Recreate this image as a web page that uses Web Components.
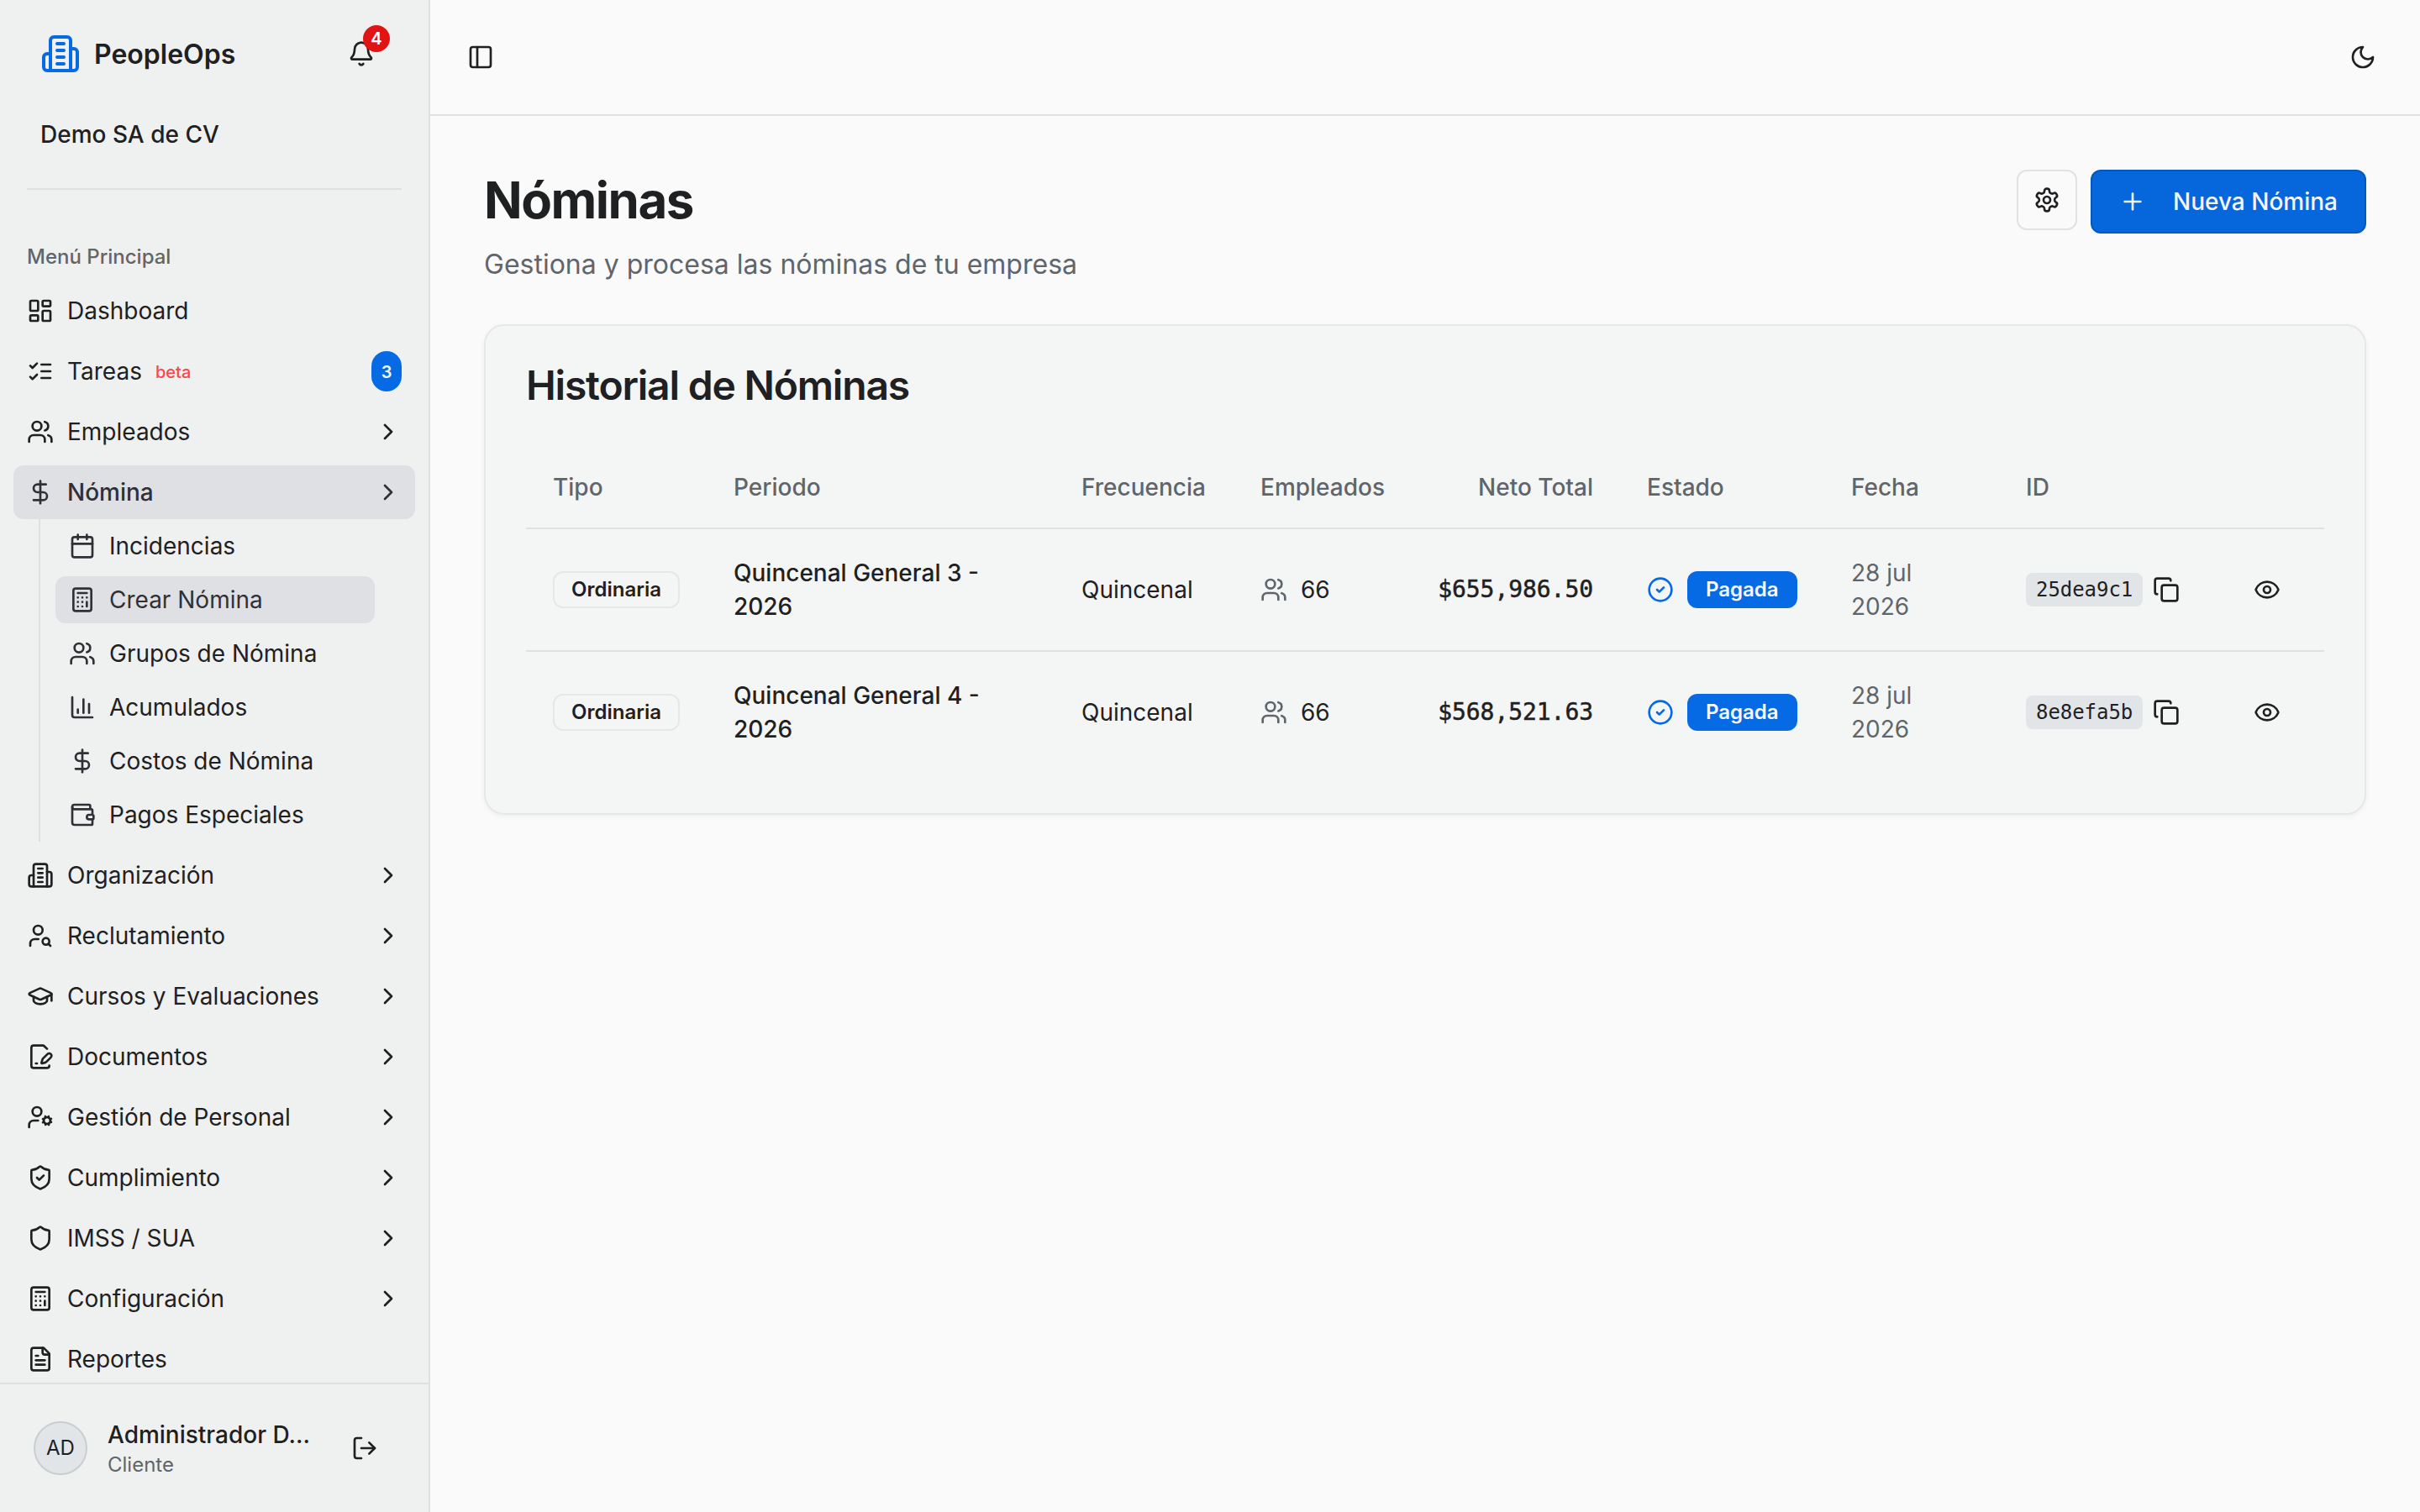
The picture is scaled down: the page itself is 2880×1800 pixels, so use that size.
<!DOCTYPE html>
<html lang="es">
<head>
<meta charset="utf-8">
<title>Nóminas | PeopleOps</title>
<style>
  :root {
    --background: #fafafa;
    --foreground: #1f2021;
    --muted: #e2e5e8;
    --muted-foreground: #60656c;
    --border: #dfe1e0;
    --primary: #066ae5;
    --sidebar: #eff1f0;
    --sidebar-accent: #dfe0e4;
    --sidebar-accent-foreground: #303136;
    --card: #f4f6f5;
    --card-border: #e6e8e7;
    --mono: "DejaVu Sans Mono", "Liberation Mono", monospace;
  }

  body {
    margin: 0;
    background: var(--background);
    color: var(--foreground);
    font: 400 28px/40px Inter, "Liberation Sans", sans-serif;
  }
</style>
</head>
<body>
<people-app></people-app>

<script>
const ICONS = {
  building: '<path d="M6 22V4a2 2 0 0 1 2-2h8a2 2 0 0 1 2 2v18Z"/><path d="M6 12H4a2 2 0 0 0-2 2v6a2 2 0 0 0 2 2h2"/><path d="M18 9h2a2 2 0 0 1 2 2v9a2 2 0 0 1-2 2h-2"/><path d="M10 6h4M10 10h4M10 14h4M10 18h4"/>',
  bell: '<path d="M10.268 21a2 2 0 0 0 3.464 0"/><path d="M3.262 15.326A1 1 0 0 0 4 17h16a1 1 0 0 0 .74-1.673C19.41 13.956 18 12.499 18 8A6 6 0 0 0 6 8c0 4.499-1.411 5.956-2.738 7.326"/>',
  panel: '<rect width="18" height="18" x="3" y="3" rx="2"/><path d="M9 3v18"/>',
  moon: '<path d="M12 3a6 6 0 0 0 9 9 9 9 0 1 1-9-9Z"/>',
  settings: '<path d="M12.22 2h-.44a2 2 0 0 0-2 2v.18a2 2 0 0 1-1 1.73l-.43.25a2 2 0 0 1-2 0l-.15-.08a2 2 0 0 0-2.73.73l-.22.38a2 2 0 0 0 .73 2.73l.15.1a2 2 0 0 1 1 1.72v.51a2 2 0 0 1-1 1.74l-.15.09a2 2 0 0 0-.73 2.73l.22.38a2 2 0 0 0 2.73.73l.15-.08a2 2 0 0 1 2 0l.43.25a2 2 0 0 1 1 1.73V20a2 2 0 0 0 2 2h.44a2 2 0 0 0 2-2v-.18a2 2 0 0 1 1-1.73l.43-.25a2 2 0 0 1 2 0l.15.08a2 2 0 0 0 2.73-.73l.22-.39a2 2 0 0 0-.73-2.73l-.15-.08a2 2 0 0 1-1-1.74v-.5a2 2 0 0 1 1-1.74l.15-.09a2 2 0 0 0 .73-2.73l-.22-.38a2 2 0 0 0-2.73-.73l-.15.08a2 2 0 0 1-2 0l-.43-.25a2 2 0 0 1-1-1.73V4a2 2 0 0 0-2-2z"/><circle cx="12" cy="12" r="3"/>',
  plus: '<path d="M5 12h14"/><path d="M12 5v14"/>',
  dashboard: '<rect width="7" height="9" x="3" y="3" rx="1"/><rect width="7" height="5" x="14" y="3" rx="1"/><rect width="7" height="9" x="14" y="12" rx="1"/><rect width="7" height="5" x="3" y="16" rx="1"/>',
  tasks: '<path d="m3 17 2 2 4-4"/><path d="m3 7 2 2 4-4"/><path d="M13 6h8"/><path d="M13 12h8"/><path d="M13 18h8"/>',
  users: '<path d="M16 21v-2a4 4 0 0 0-4-4H6a4 4 0 0 0-4 4v2"/><circle cx="9" cy="7" r="4"/><path d="M22 21v-2a4 4 0 0 0-3-3.87"/><path d="M16 3.13a4 4 0 0 1 0 7.75"/>',
  dollar: '<path d="M12 2v20"/><path d="M17 5H9.5a3.5 3.5 0 0 0 0 7h5a3.5 3.5 0 0 1 0 7H6"/>',
  calendar: '<path d="M8 2v4"/><path d="M16 2v4"/><rect width="18" height="18" x="3" y="4" rx="2"/><path d="M3 10h18"/>',
  calculator: '<rect width="16" height="20" x="4" y="2" rx="2"/><path d="M8 6h8"/><path d="M16 14v4"/><path d="M16 10h.01M12 10h.01M8 10h.01M12 14h.01M8 14h.01M12 18h.01M8 18h.01"/>',
  chart: '<path d="M3 3v16a2 2 0 0 0 2 2h16"/><path d="M18 17V9"/><path d="M13 17V5"/><path d="M8 17v-3"/>',
  wallet: '<path d="M19 7V4a1 1 0 0 0-1-1H5a2 2 0 0 0 0 4h15a1 1 0 0 1 1 1v4h-3a2 2 0 0 0 0 4h3a1 1 0 0 0 1-1v-2a1 1 0 0 0-1-1"/><path d="M3 5v14a2 2 0 0 0 2 2h15a1 1 0 0 0 1-1v-4"/>',
  userSearch: '<circle cx="10" cy="7" r="4"/><path d="M10.3 15H7a4 4 0 0 0-4 4v2"/><circle cx="17" cy="17" r="3"/><path d="m21 21-1.9-1.9"/>',
  graduation: '<path d="M21.42 10.922a1 1 0 0 0-.019-1.838L12.83 5.18a2 2 0 0 0-1.66 0L2.6 9.08a1 1 0 0 0 0 1.832l8.57 3.908a2 2 0 0 0 1.66 0z"/><path d="M22 10v6"/><path d="M6 12.5V16a6 3 0 0 0 12 0v-3.5"/>',
  filePen: '<path d="m18 5-2.414-2.414A2 2 0 0 0 14.172 2H6a2 2 0 0 0-2 2v16a2 2 0 0 0 2 2h12a2 2 0 0 0 2-2"/><path d="M21.378 12.626a1 1 0 0 0-3.004-3.004l-4.01 4.012a2 2 0 0 0-.506.854l-.837 2.87a.5.5 0 0 0 .62.62l2.87-.837a2 2 0 0 0 .854-.506z"/><path d="M8 18h1"/>',
  userCog: '<circle cx="18" cy="15" r="3"/><circle cx="9" cy="7" r="4"/><path d="M10 15H6a4 4 0 0 0-4 4v2"/><path d="m21.7 16.4-.9-.3"/><path d="m15.2 13.9-.9-.3"/><path d="m16.6 18.7.3-.9"/><path d="m19.1 12.2.3-.9"/><path d="m19.6 18.7-.4-1"/><path d="m16.8 12.3-.4-1"/><path d="m14.3 16.6 1-.4"/><path d="m20.7 13.8 1-.4"/>',
  shield: '<path d="M20 13c0 5-3.5 7.5-7.66 8.95a1 1 0 0 1-.67-.01C7.5 20.5 4 18 4 13V6a1 1 0 0 1 1-1c2 0 4.5-1.2 6.24-2.72a1.17 1.17 0 0 1 1.52 0C14.51 3.81 17 5 19 5a1 1 0 0 1 1 1z"/>',
  fileText: '<path d="M15 2H6a2 2 0 0 0-2 2v16a2 2 0 0 0 2 2h12a2 2 0 0 0 2-2V7Z"/><path d="M14 2v4a2 2 0 0 0 2 2h4"/><path d="M10 9H8"/><path d="M16 13H8"/><path d="M16 17H8"/>',
  chevron: '<path d="m9 18 6-6-6-6"/>',
  logout: '<path d="M9 21H5a2 2 0 0 1-2-2V5a2 2 0 0 1 2-2h4"/><path d="m16 17 5-5-5-5"/><path d="M21 12H9"/>',
  circleCheck: '<circle cx="12" cy="12" r="10"/><path d="m9 12 2 2 4-4"/>',
  copy: '<rect width="14" height="14" x="8" y="8" rx="2"/><path d="M4 16c-1.1 0-2-.9-2-2V4c0-1.1.9-2 2-2h10c1.1 0 2 .9 2 2"/>',
  eye: '<path d="M2.062 12.348a1 1 0 0 1 0-.696 10.75 10.75 0 0 1 19.876 0 1 1 0 0 1 0 .696 10.75 10.75 0 0 1-19.876 0"/><circle cx="12" cy="12" r="3"/>',
};
ICONS.shieldCheck = ICONS.shield + '<path d="m9 12 2 2 4-4"/>';

class UiIcon extends HTMLElement {
  connectedCallback() {
    const root = this.attachShadow({ mode: "open" });
    root.innerHTML = `
      <style>
        :host { display: block; flex: none; width: 32px; height: 32px; }
        svg { display: block; width: 100%; height: 100%; }
      </style>
      <svg viewBox="0 0 24 24" fill="none" stroke="currentColor" stroke-width="2"
        stroke-linecap="round" stroke-linejoin="round">${ICONS[this.getAttribute("name")]}</svg>
    `;
  }
}

class UiBadge extends HTMLElement {
  connectedCallback() {
    const root = this.attachShadow({ mode: "open" });
    root.innerHTML = `
      <style>
        :host {
          display: inline-flex;
          align-items: center;
          justify-content: center;
          box-sizing: border-box;
          height: 44px;
          padding: 0 20px;
          border: 2px solid var(--card-border);
          border-radius: 12px;
          font-size: 24px;
          font-weight: 600;
          line-height: 32px;
          vertical-align: middle;
        }
        :host([variant="primary"]) {
          background: var(--primary);
          border-color: transparent;
          color: #f5f9ff;
        }
      </style>
      <slot></slot>
    `;
  }
}

class NavItem extends HTMLElement {
  connectedCallback() {
    const root = this.attachShadow({ mode: "open" });
    root.innerHTML = `
      <style>
        :host {
          display: flex;
          align-items: center;
          gap: 16px;
          box-sizing: border-box;
          flex: none;
          height: 64px;
          padding: 0 16px;
          border-radius: 12px;
          white-space: nowrap;
        }
        :host([sub]) { height: 56px; }
        :host([sub]) ui-icon { color: var(--sidebar-accent-foreground); }
        :host([active]) {
          background: var(--sidebar-accent);
          color: var(--sidebar-accent-foreground);
        }
        :host([active]:not([sub])) { font-weight: 500; }
        .chevron { margin-left: auto; }
      </style>
      <ui-icon name="${this.getAttribute("icon")}"></ui-icon>
      <slot></slot>
      ${this.hasAttribute("expandable") ? '<ui-icon class="chevron" name="chevron"></ui-icon>' : ""}
    `;
  }
}

class AppSidebar extends HTMLElement {
  connectedCallback() {
    const root = this.attachShadow({ mode: "open" });
    root.innerHTML = `
      <style>
        :host {
          display: flex;
          flex-direction: column;
          box-sizing: border-box;
          width: 512px;
          height: 1800px;
          background: var(--sidebar);
          border-right: 2px solid var(--border);
        }
        header {
          flex: none;
          box-sizing: border-box;
          height: 226px;
          margin: 0 32px;
          border-bottom: 2px solid var(--border);
        }
        .brand {
          display: flex;
          align-items: center;
          height: 128px;
          padding: 0 32px 0 16px;
        }
        .brand .logo { width: 48px; height: 48px; color: var(--primary); }
        .brand b { margin-left: 16px; padding-top: 2px; font-size: 32px; font-weight: 600; }
        .bell { position: relative; margin-left: auto; }
        .count {
          position: absolute;
          top: -18px;
          left: 18px;
          width: 32px;
          height: 32px;
          border-radius: 50%;
          background: #e11414;
          color: #fff;
          font-size: 20px;
          font-weight: 600;
          line-height: 33px;
          text-align: center;
        }
        .company { padding: 12px 16px; font-weight: 500; }
        nav {
          display: flex;
          flex-direction: column;
          gap: 8px;
          flex: 1;
          min-height: 0;
          padding: 48px 16px 0;
          overflow: hidden;
        }
        .label {
          flex: none;
          height: 64px;
          margin-bottom: -8px;
          padding: 0 16px;
          color: #646565;
          font-size: 24px;
          font-weight: 500;
          line-height: 64px;
        }
        .beta { padding-top: 2px; color: #fb4649; font-size: 20px; font-weight: 500; }
        .tasks {
          width: 36px;
          height: 48px;
          margin-left: auto;
          border-radius: 18px;
          background: var(--primary);
          color: #f5f9ff;
          font-size: 20px;
          font-weight: 600;
          line-height: 50px;
          text-align: center;
        }
        .submenu {
          display: flex;
          flex-direction: column;
          gap: 8px;
          flex: none;
          margin: -8px 48px 0 30px;
          padding: 4px 0 4px 18px;
          border-left: 2px solid var(--border);
        }
        footer {
          display: flex;
          align-items: center;
          flex: none;
          box-sizing: border-box;
          height: 154px;
          padding: 0 60px 0 40px;
          border-top: 2px solid var(--border);
        }
        .avatar {
          box-sizing: border-box;
          width: 64px;
          height: 64px;
          margin-right: 24px;
          border: 2px solid #cbcdd0;
          border-radius: 50%;
          background: var(--muted);
          font-size: 24px;
          line-height: 60px;
          text-align: center;
        }
        .name { font-weight: 500; line-height: 40px; }
        .role { color: var(--muted-foreground); font-size: 24px; line-height: 32px; }
        footer ui-icon { margin-left: auto; }
      </style>
      <header>
        <div class="brand">
          <ui-icon class="logo" name="building"></ui-icon>
          <b>PeopleOps</b>
          <div class="bell"><ui-icon name="bell"></ui-icon><span class="count">4</span></div>
        </div>
        <div class="company">Demo SA de CV</div>
      </header>
      <nav>
        <div class="label">Menú Principal</div>
        <nav-item icon="dashboard">Dashboard</nav-item>
        <nav-item icon="tasks">Tareas <span class="beta">beta</span><span class="tasks">3</span></nav-item>
        <nav-item icon="users" expandable>Empleados</nav-item>
        <nav-item icon="dollar" expandable active>Nómina</nav-item>
        <div class="submenu">
          <nav-item sub icon="calendar">Incidencias</nav-item>
          <nav-item sub icon="calculator" active>Crear Nómina</nav-item>
          <nav-item sub icon="users">Grupos de Nómina</nav-item>
          <nav-item sub icon="chart">Acumulados</nav-item>
          <nav-item sub icon="dollar">Costos de Nómina</nav-item>
          <nav-item sub icon="wallet">Pagos Especiales</nav-item>
        </div>
        <nav-item icon="building" expandable>Organización</nav-item>
        <nav-item icon="userSearch" expandable>Reclutamiento</nav-item>
        <nav-item icon="graduation" expandable>Cursos y Evaluaciones</nav-item>
        <nav-item icon="filePen" expandable>Documentos</nav-item>
        <nav-item icon="userCog" expandable>Gestión de Personal</nav-item>
        <nav-item icon="shieldCheck" expandable>Cumplimiento</nav-item>
        <nav-item icon="shield" expandable>IMSS / SUA</nav-item>
        <nav-item icon="calculator" expandable>Configuración</nav-item>
        <nav-item icon="fileText">Reportes</nav-item>
      </nav>
      <footer>
        <div class="avatar">AD</div>
        <div>
          <div class="name">Administrador D…</div>
          <div class="role">Cliente</div>
        </div>
        <ui-icon name="logout"></ui-icon>
      </footer>
    `;
  }
}

class UiButton extends HTMLElement {
  connectedCallback() {
    const root = this.attachShadow({ mode: "open" });
    root.innerHTML = `
      <style>
        :host {
          display: flex;
          align-items: center;
          justify-content: center;
          gap: 32px;
          box-sizing: border-box;
          width: 72px;
          height: 72px;
          border: 2px solid #e2e2e2;
          border-radius: 12px;
          font-weight: 500;
          white-space: nowrap;
        }
        :host([variant="primary"]) {
          width: 328px;
          height: 76px;
          background: #0667dd;
          border-color: #0558bd;
          color: #f3f5f8;
        }
      </style>
      <ui-icon name="${this.getAttribute("icon")}"></ui-icon><slot></slot>
    `;
  }
}

class PayrollTable extends HTMLElement {
  constructor() {
    super();
    this.rows = [
      { period: "Quincenal General 3 - 2026", total: "$655,986.50", id: "25dea9c1" },
      { period: "Quincenal General 4 - 2026", total: "$568,521.63", id: "8e8efa5b" },
    ];
  }

  connectedCallback() {
    const root = this.attachShadow({ mode: "open" });
    root.innerHTML = `
      <style>
        :host { display: block; }
        table { width: 2140px; table-layout: fixed; border-collapse: separate; border-spacing: 0; }
        th, td { box-sizing: border-box; padding: 0 32px; text-align: left; vertical-align: middle; }
        th {
          height: 98px;
          border-bottom: 2px solid var(--border);
          color: var(--muted-foreground);
          font-weight: 500;
          white-space: nowrap;
        }
        td { height: 144px; }
        tr:not(:last-child) td { height: 146px; border-bottom: 2px solid var(--border); }
        .period { font-weight: 500; }
        .right { text-align: right; }
        .total { font-family: var(--mono); letter-spacing: -0.056px; -webkit-text-stroke: 0.5px; }
        .line { display: flex; align-items: center; gap: 16px; }
        .date, .employees ui-icon { color: var(--muted-foreground); }
        .status > ui-icon { color: var(--primary); }
        .id { gap: 12px; }
        code {
          padding: 0 12px;
          border-radius: 8px;
          background: var(--muted);
          font: 24px/40px var(--mono);
          letter-spacing: -0.048px;
        }
        .view { margin: 0 auto; }
      </style>
      <table>
        <colgroup>
          <col style="width: 215px"><col style="width: 414px"><col style="width: 213px">
          <col style="width: 211px"><col style="width: 249px"><col style="width: 243px">
          <col style="width: 208px"><col style="width: 251px"><col style="width: 136px">
        </colgroup>
        <thead>
          <tr>
            <th>Tipo</th><th>Periodo</th><th>Frecuencia</th><th>Empleados</th>
            <th class="right">Neto Total</th><th>Estado</th><th>Fecha</th><th>ID</th><th></th>
          </tr>
        </thead>
        <tbody>
          ${this.rows.map((row) => `
          <tr>
            <td><ui-badge>Ordinaria</ui-badge></td>
            <td class="period">${row.period}</td>
            <td>Quincenal</td>
            <td><div class="line employees"><ui-icon name="users"></ui-icon>66</div></td>
            <td class="right total">${row.total}</td>
            <td><div class="line status"><ui-icon name="circleCheck"></ui-icon><ui-badge variant="primary">Pagada</ui-badge></div></td>
            <td class="date">28 jul<br>2026</td>
            <td><div class="line id"><code>${row.id}</code><ui-icon name="copy"></ui-icon></div></td>
            <td><ui-icon class="view" name="eye"></ui-icon></td>
          </tr>`).join("")}
        </tbody>
      </table>
    `;
  }
}

class UiCard extends HTMLElement {
  connectedCallback() {
    const root = this.attachShadow({ mode: "open" });
    root.innerHTML = `
      <style>
        :host {
          display: block;
          box-sizing: border-box;
          height: 584px;
          padding: 47px 48px 48px;
          background: var(--card);
          border: 2px solid var(--card-border);
          border-radius: 24px;
          box-shadow: 0 2px 6px rgba(0, 0, 0, 0.05);
        }
        h2 {
          margin: 0 0 49px;
          font-size: 48px;
          font-weight: 600;
          line-height: 48px;
          letter-spacing: -0.025em;
        }
      </style>
      <h2><slot name="title"></slot></h2>
      <slot></slot>
    `;
  }
}

class PeopleApp extends HTMLElement {
  connectedCallback() {
    const root = this.attachShadow({ mode: "open" });
    root.innerHTML = `
      <style>
        :host { display: flex; height: 1800px; overflow: hidden; }
        main { flex: 1; min-width: 0; }
        .topbar {
          display: flex;
          align-items: center;
          justify-content: space-between;
          box-sizing: border-box;
          height: 138px;
          padding: 0 52px 0 44px;
          border-bottom: 2px solid #e1e1e1;
        }
        .content { padding: 64px; }
        .heading { display: flex; justify-content: space-between; height: 184px; }
        h1 {
          margin: 0;
          font-size: 60px;
          font-weight: 700;
          line-height: 72px;
          letter-spacing: -0.025em;
        }
        p { margin: 17px 0 0; color: var(--muted-foreground); font-size: 32px; line-height: 48px; }
        .actions { display: flex; align-items: flex-start; gap: 16px; }
      </style>
      <app-sidebar></app-sidebar>
      <main>
        <div class="topbar">
          <ui-icon name="panel"></ui-icon>
          <ui-icon name="moon"></ui-icon>
        </div>
        <div class="content">
          <div class="heading">
            <div>
              <h1>Nóminas</h1>
              <p>Gestiona y procesa las nóminas de tu empresa</p>
            </div>
            <div class="actions">
              <ui-button icon="settings"></ui-button>
              <ui-button icon="plus" variant="primary">Nueva Nómina</ui-button>
            </div>
          </div>
          <ui-card>
            <span slot="title">Historial de Nóminas</span>
            <payroll-table></payroll-table>
          </ui-card>
        </div>
      </main>
    `;
  }
}

customElements.define("ui-icon", UiIcon);
customElements.define("ui-badge", UiBadge);
customElements.define("ui-button", UiButton);
customElements.define("ui-card", UiCard);
customElements.define("nav-item", NavItem);
customElements.define("app-sidebar", AppSidebar);
customElements.define("payroll-table", PayrollTable);
customElements.define("people-app", PeopleApp);
</script>
</body>
</html>
